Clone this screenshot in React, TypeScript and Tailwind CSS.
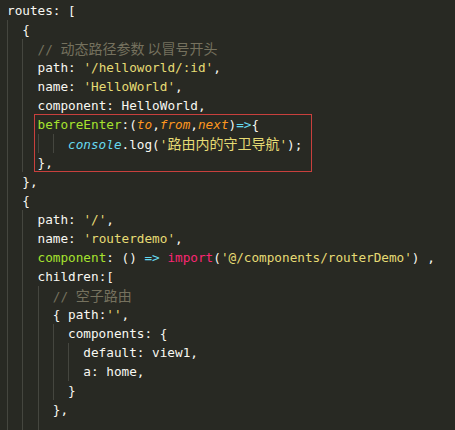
import React from 'react';

type LineProps = { indent?: number; children?: React.ReactNode };

// one editor row; indent = number of 2-space levels, each drawn with a guide
const Line = ({ indent = 0, children }: LineProps) => (
    <div className="flex h-[19px] leading-[19px] whitespace-pre">
        {Array.from({ length: indent }).map((_, i) => (
            <span key={i} className="w-[2ch] shrink-0 border-l border-[#45463f]" />
        ))}
        <span>{children}</span>
    </div>
);

const Str = ({ children }: { children: React.ReactNode }) => <span className="text-[#e6db74]">{children}</span>;
const Cmt = ({ children }: { children: React.ReactNode }) => <span className="text-[#75715e]">{children}</span>;
const Fn = ({ children }: { children: React.ReactNode }) => <span className="text-[#a6e22e]">{children}</span>;
const Arg = ({ children }: { children: React.ReactNode }) => <span className="text-[#fd971f] italic">{children}</span>;
const Op = ({ children }: { children: React.ReactNode }) => <span className="text-[#66d9ef]">{children}</span>;
const Kw = ({ children }: { children: React.ReactNode }) => <span className="text-[#f92672]">{children}</span>;
const Cjk = ({ children }: { children: React.ReactNode }) => (
    <span className="font-['Noto_Sans_CJK_SC',sans-serif] text-[14px]">{children}</span>
);

const App = () => {
    return (
        <div className="relative w-[455px] h-[430px] overflow-hidden bg-[#282923] pl-[7px] pt-px font-['DejaVu_Sans_Mono','Noto_Sans_CJK_SC',monospace] text-[12.7px] text-[#f8f8f2]">
            <Line>routes: [</Line>
            <Line indent={1}>{'{'}</Line>
            <Line indent={2}>
                <Cmt>// <Cjk>动态路径参数 以冒号开头</Cjk></Cmt>
            </Line>
            <Line indent={2}>
                path: <Str>'/helloworld/:id'</Str>,
            </Line>
            <Line indent={2}>
                name: <Str>'HelloWorld'</Str>,
            </Line>
            <Line indent={2}>component: HelloWorld,</Line>
            <Line indent={2}>
                <Fn>beforeEnter</Fn>:(<Arg>to</Arg>,<Arg>from</Arg>,<Arg>next</Arg>)<Op>=&gt;</Op>{'{'}
            </Line>
            <Line indent={4}>
                <span className="text-[#66d9ef] italic">console</span>.log(
                <Str>
                    '<Cjk>路由内的守卫导航</Cjk>'
                </Str>
                );
            </Line>
            <Line indent={2}>{'},'}</Line>
            <Line indent={1}>{'},'}</Line>
            <Line indent={1}>{'{'}</Line>
            <Line indent={2}>
                path: <Str>'/'</Str>,
            </Line>
            <Line indent={2}>
                name: <Str>'routerdemo'</Str>,
            </Line>
            <Line indent={2}>
                <Fn>component</Fn>: () <Op>=&gt;</Op> <Kw>import</Kw>(<Str>'@/components/routerDemo'</Str>) ,
            </Line>
            <Line indent={2}>children:[</Line>
            <Line indent={3}>
                <Cmt>// <Cjk>空子路由</Cjk></Cmt>
            </Line>
            <Line indent={3}>
                {'{ path:'}<Str>''</Str>,
            </Line>
            <Line indent={4}>components: {'{'}</Line>
            <Line indent={5}>default: view1,</Line>
            <Line indent={5}>a: home,</Line>
            <Line indent={4}>{'}'}</Line>
            <Line indent={3}>{'},'}</Line>
            <Line indent={3} />

            {/* annotation box drawn over the beforeEnter block */}
            <div className="absolute left-[34px] top-[114px] w-[278px] h-[58px] border border-[#c9403d]" />
        </div>
    );
};

export default App;
